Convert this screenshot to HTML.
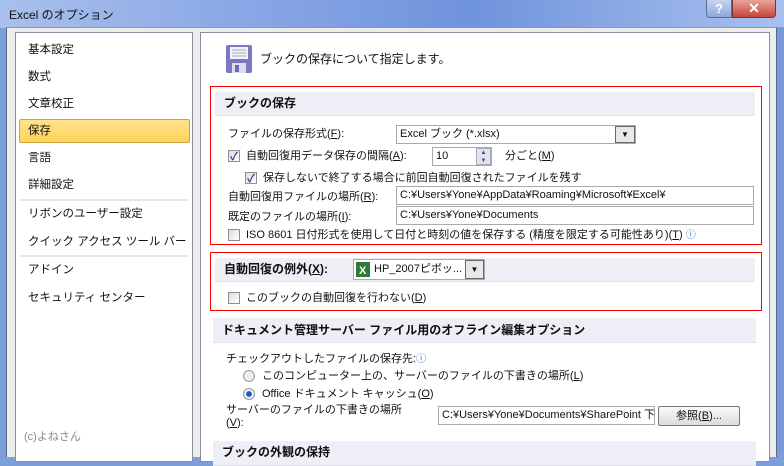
<!DOCTYPE html><html><head><meta charset="utf-8"><style>
*{margin:0;padding:0;box-sizing:border-box}
body{width:784px;height:453px;overflow:hidden;position:relative;font-family:"Liberation Sans","Noto Sans CJK JP",sans-serif;font-size:11px;color:#111;background:#7c9fdc}
.a{position:absolute}
.title{left:0;top:0;width:784px;height:28px;background:linear-gradient(90deg,#a9c0ec,#8ba8e6 30%,#6f93dc 60%,#a8c0ee);}
.frame{left:6px;top:27px;width:771px;height:430px;background:#ececec;border-left:1px solid #5a6a8a;border-right:1px solid #5a6a8a;border-top:1px solid #8a98b8}
.nav{left:15px;top:32px;width:178px;height:430px;background:#fff;border:1px solid #8a8e9c}
.main{left:200px;top:32px;width:570px;height:430px;background:#fff;border:1px solid #8a8e9c}
.ni{position:absolute;left:12px;font-size:11.5px;white-space:nowrap;line-height:14px}
.sep{position:absolute;left:4px;width:168px;height:2px;background:#e3e6ea}
.red{border:1px solid #f00}
.band{background:#eeeef6;border-bottom:1px solid #e2e2ea;font-weight:bold;font-size:12px;padding-left:9px;line-height:23px;white-space:nowrap}
.cb{position:absolute;width:12px;height:12px;border:1px solid #8f8f8f;background:linear-gradient(135deg,#ddd,#fff)}
.chk::after{content:"✓";position:absolute;left:1px;top:-3px;font-size:11px;color:#2a3a9a;font-weight:bold}
.inp{position:absolute;height:19px;border:1px solid #aaa;background:#fff;font-size:11px;line-height:17px;padding-left:3px;white-space:nowrap;overflow:hidden}
.t{position:absolute;white-space:nowrap;line-height:14px}
.rad{position:absolute;width:12px;height:12px;border-radius:50%;border:1px solid #999;background:#eee}
</style></head><body>
<div class="a title"></div>
<div class="a" style="left:9px;top:6px;font-size:12px;color:#111">Excel のオプション</div>
<div class="a" style="left:706px;top:0;width:26px;height:18px;background:linear-gradient(#c6d4f2,#8ea8dc);border:1px solid #5a6a9a;border-top:none;border-radius:0 0 0 4px;color:#fff;font-weight:bold;text-align:center;line-height:17px;font-size:13px">?</div>
<div class="a" style="left:732px;top:0;width:44px;height:18px;background:linear-gradient(#e8a49a,#c8443a);border:1px solid #6a3a3a;border-top:none;border-radius:0 0 4px 0;color:#fff;font-weight:bold;text-align:center;line-height:16px;font-size:14px">✕</div>
<div class="a frame"></div>
<div class="a nav">
<div class="ni" style="top:10px">基本設定</div>
<div class="ni" style="top:37px">数式</div>
<div class="ni" style="top:64px">文章校正</div>
<div style="position:absolute;left:3px;top:86px;width:171px;height:24px;background:linear-gradient(#ffe28a,#ffd45a);border:1px solid #c9a548;border-radius:2px"></div>
<div class="ni" style="top:91px">保存</div>
<div class="ni" style="top:118px">言語</div>
<div class="ni" style="top:145px">詳細設定</div>
<div class="sep" style="top:166px"></div>
<div class="ni" style="top:174px">リボンのユーザー設定</div>
<div class="ni" style="top:202px">クイック アクセス ツール バー</div>
<div class="sep" style="top:222px"></div>
<div class="ni" style="top:230px">アドイン</div>
<div class="ni" style="top:258px">セキュリティ センター</div>
<div class="ni" style="top:397px;left:8px;font-size:11px;color:#888">(c)よねさん</div>
</div>
<div class="a main">
<svg style="position:absolute;left:25px;top:12px" width="26" height="28" viewBox="0 0 26 28"><rect x="0" y="0" width="26" height="28" rx="2" fill="#7a78c0"/><rect x="4" y="2" width="18" height="12" fill="#f2f2f8"/><line x1="6" y1="5" x2="20" y2="5" stroke="#aab"/><line x1="6" y1="8" x2="20" y2="8" stroke="#aab"/><line x1="6" y1="11" x2="20" y2="11" stroke="#aab"/><rect x="6" y="18" width="14" height="10" fill="#dcdcec"/><rect x="9" y="20" width="4" height="7" fill="#6a68b0"/></svg>
<div class="t" style="left:59px;top:19px;font-size:12px">ブックの保存について指定します。</div>
</div>
<div class="a red" style="left:210px;top:86px;width:552px;height:159px"></div>
<div class="a band" style="left:215px;top:92px;width:540px;height:24px">ブックの保存</div>
<div class="t" style="left:228px;top:127px">ファイルの保存形式(<u>F</u>):</div>
<div class="inp" style="left:396px;top:125px;width:240px">Excel ブック (*.xlsx)</div>
<div class="a" style="left:615px;top:126px;width:20px;height:17px;background:#e8e8e8;border:1px solid #666;font-size:8px;text-align:center;line-height:16px">▼</div>
<div class="cb chk" style="left:228px;top:150px"></div>
<div class="t" style="left:246px;top:149px">自動回復用データ保存の間隔(<u>A</u>):</div>
<div class="inp" style="left:432px;top:147px;width:60px">10</div>
<div class="a" style="left:476px;top:148px;width:15px;height:17px;background:#dde4f0;border:1px solid #aab;font-size:6px;line-height:8px;text-align:center;color:#446">▲<br>▼</div>
<div class="t" style="left:505px;top:149px">分ごと(<u>M</u>)</div>
<div class="cb chk" style="left:245px;top:172px"></div>
<div class="t" style="left:263px;top:171px">保存しないで終了する場合に前回自動回復されたファイルを残す</div>
<div class="t" style="left:228px;top:190px">自動回復用ファイルの場所(<u>R</u>):</div>
<div class="inp" style="left:396px;top:186px;width:358px">C:¥Users¥Yone¥AppData¥Roaming¥Microsoft¥Excel¥</div>
<div class="t" style="left:228px;top:210px">既定のファイルの場所(<u>I</u>):</div>
<div class="inp" style="left:396px;top:206px;width:358px">C:¥Users¥Yone¥Documents</div>
<div class="cb" style="left:228px;top:229px"></div>
<div class="t" style="left:246px;top:228px">ISO 8601 日付形式を使用して日付と時刻の値を保存する (精度を限定する可能性あり)(<u>T</u>) <span style="color:#36c;font-size:10px">ⓘ</span></div>
<div class="a red" style="left:210px;top:252px;width:552px;height:59px"></div>
<div class="a band" style="left:215px;top:258px;width:540px;height:24px">自動回復の例外(<u>X</u>):</div>
<div class="inp" style="left:353px;top:259px;width:132px;height:21px;padding-left:20px;line-height:19px">HP_2007ピボッ...</div>
<svg class="a" style="left:356px;top:262px" width="14" height="15"><rect width="14" height="15" fill="#2f7a3a"/><text x="3" y="12" font-size="11" fill="#fff" font-family="Liberation Sans" font-weight="bold">X</text></svg>
<div class="a" style="left:465px;top:260px;width:19px;height:19px;background:#e8e8e8;border:1px solid #666;font-size:8px;text-align:center;line-height:18px">▼</div>
<div class="cb" style="left:228px;top:292px"></div>
<div class="t" style="left:246px;top:291px">このブックの自動回復を行わない(<u>D</u>)</div>
<div class="a band" style="left:213px;top:318px;width:543px;height:25px;line-height:24px">ドキュメント管理サーバー ファイル用のオフライン編集オプション</div>
<div class="t" style="left:226px;top:352px">チェックアウトしたファイルの保存先:<span style="color:#36c;font-size:10px">ⓘ</span></div>
<div class="rad" style="left:243px;top:370px"></div>
<div class="t" style="left:262px;top:369px">このコンピューター上の、サーバーのファイルの下書きの場所(<u>L</u>)</div>
<div class="rad" style="left:243px;top:388px;background:radial-gradient(circle,#1a5ac8 35%,#eee 45%)"></div>
<div class="t" style="left:262px;top:387px">Office ドキュメント キャッシュ(<u>O</u>)</div>
<div class="t" style="left:226px;top:404px;line-height:13px">サーバーのファイルの下書きの場所<br>(<u>V</u>):</div>
<div class="inp" style="left:438px;top:406px;width:217px">C:¥Users¥Yone¥Documents¥SharePoint 下</div>
<div class="a" style="left:658px;top:406px;width:82px;height:20px;border:1px solid #777;border-radius:2px;background:linear-gradient(#fafafa,#dcdcdc);text-align:center;line-height:18px">参照(<u>B</u>)...</div>
<div class="a band" style="left:213px;top:441px;width:543px;height:25px;line-height:22px">ブックの外観の保持</div>
<div class="a" style="left:777px;top:27px;width:7px;height:426px;background:#7898d8"></div>
</body></html>
